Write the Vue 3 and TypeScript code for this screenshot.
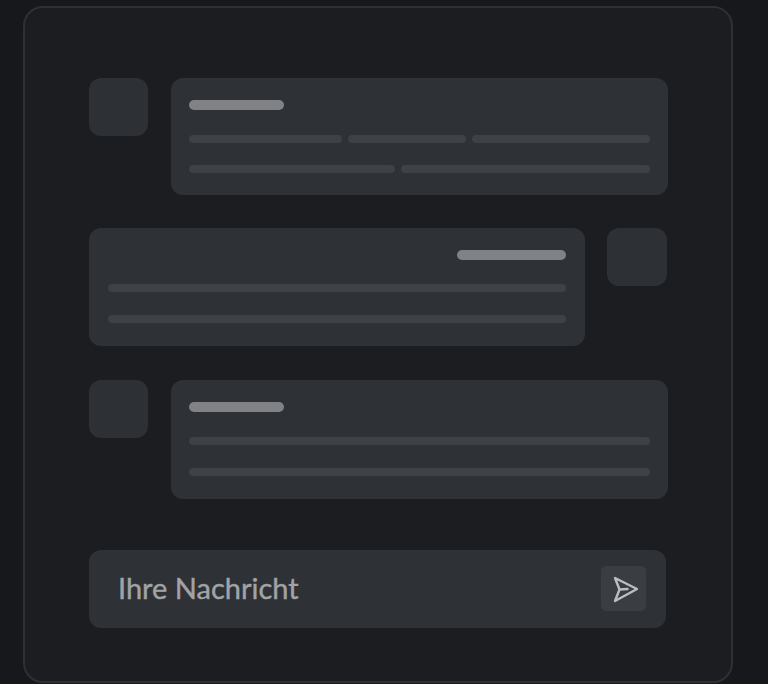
<script setup lang="ts">
interface Row { w: number }
const firstLines: Row[][] = [
  [{ w: 153 }, { w: 119 }, { w: 178 }],
  [{ w: 206 }, { w: 248 }],
]
</script>

<template>
  <div class="page">
    <section class="panel">
      <div class="thread">
        <div class="msg">
          <div class="avatar"></div>
          <div class="bubble">
            <div class="title"></div>
            <div class="lines">
              <div v-for="(row, i) in firstLines" :key="i" class="line-row">
                <div v-for="(s, j) in row" :key="j" class="line" :style="{ flexGrow: s.w }"></div>
              </div>
            </div>
          </div>
        </div>

        <div class="msg msg-own">
          <div class="bubble bubble-own">
            <div class="title title-own"></div>
            <div class="lines lines-own">
              <div class="line-row"><div class="line"></div></div>
              <div class="line-row"><div class="line"></div></div>
            </div>
          </div>
          <div class="avatar avatar-own"></div>
        </div>

        <div class="msg msg-last">
          <div class="avatar"></div>
          <div class="bubble">
            <div class="title"></div>
            <div class="lines lines-last">
              <div class="line-row"><div class="line"></div></div>
              <div class="line-row"><div class="line"></div></div>
            </div>
          </div>
        </div>
      </div>

      <div class="composer">
        <span class="placeholder">Ihre Nachricht</span>
        <button class="send" type="button" aria-label="Senden">
          <svg width="30" height="30" viewBox="0 0 30 30" fill="none" stroke="#bcbdc0" stroke-width="2.4" stroke-linejoin="round" stroke-linecap="round">
            <path d="M6 4 L28 15 L6 27 L10.5 15.5 Z" />
            <path d="M10.5 15.5 L18.5 15" />
          </svg>
        </button>
      </div>
    </section>
  </div>
</template>

<style scoped>
.page {
  width: 768px;
  height: 684px;
  overflow: hidden;
  background: #17181b;
  padding: 6px 35px 0 23px;
  box-sizing: border-box;
}
.panel {
  box-sizing: border-box;
  height: 677px;
  border: 2px solid #2d3034;
  border-radius: 20px;
  background: #1b1d20;
  padding: 70px 64px 0 64px;
  display: flex;
  flex-direction: column;
}
.thread {
  display: flex;
  flex-direction: column;
}
.msg {
  display: flex;
  align-items: flex-start;
  gap: 23px;
  margin-bottom: 33px;
}
.msg-own {
  gap: 22px;
  margin-bottom: 34px;
  width: 578px;
}
.msg-last {
  margin-bottom: 51px;
}
.avatar {
  width: 59px;
  height: 58px;
  flex: none;
  border-radius: 12px;
  background: #2d3034;
}
.avatar-own {
  width: 60px;
}
.bubble {
  width: 497px;
  flex: none;
  box-sizing: border-box;
  height: 117px;
  padding: 22px 18px 0;
  border-radius: 12px;
  background: #2e3135;
}
.bubble-own {
  width: 496px;
  height: 118px;
  padding: 22px 19px 0;
}
.msg-last .bubble {
  height: 119px;
}
.title {
  width: 95px;
  height: 10px;
  border-radius: 5px;
  background: #818286;
}
.title-own {
  width: 109px;
  margin-left: auto;
}
.lines {
  margin-top: 25px;
  display: flex;
  flex-direction: column;
  gap: 22px;
}
.lines-own {
  margin-top: 24px;
  gap: 23px;
}
.lines-last {
  gap: 23px;
}
.line-row {
  display: flex;
  gap: 6px;
  height: 8px;
}
.line {
  flex: 1 1 0;
  height: 8px;
  border-radius: 4px;
  background: #3e4145;
}
.composer {
  width: 577px;
  height: 78px;
  box-sizing: border-box;
  border-radius: 12px;
  background: #2e3135;
  padding: 0 20px 1px 29px;
  display: flex;
  align-items: center;
  justify-content: space-between;
}
.placeholder {
  font-family: "Lato", "Noto Sans", sans-serif;
  font-size: 29px;
  line-height: 1;
  padding-bottom: 3px;
  color: #a2a3a6;
  -webkit-text-stroke: 0.4px #a2a3a6;
}
.send {
  width: 45px;
  height: 45px;
  padding: 0;
  border: 0;
  border-radius: 5px;
  background: #3a3d41;
  display: flex;
  align-items: center;
  justify-content: center;
}
</style>

<style>
html, body { background: #17181b; }
</style>
